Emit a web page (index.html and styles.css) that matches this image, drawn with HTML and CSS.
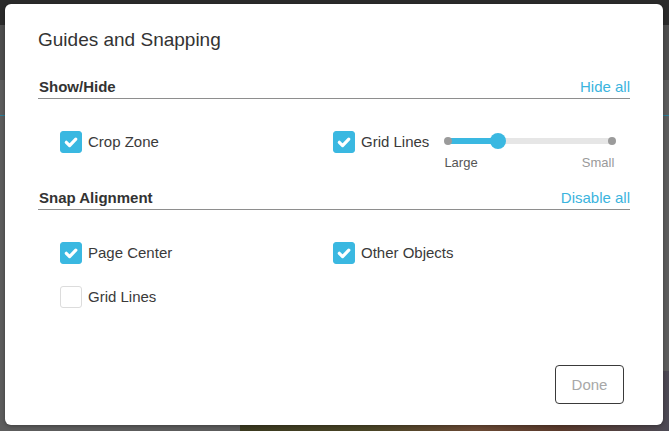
FILE: index.html
```html
<!DOCTYPE html>
<html>
<head>
<meta charset="utf-8">
<link rel="stylesheet" href="styles.css">
</head>
<body>
<div class="app">
  <div class="topbar"></div>
  <div class="toolbar"></div>
  <div class="workspace">
    <div class="teal-line"></div>
    <div class="photo"></div>
  </div>
</div>

<div class="dialog">
  <h1 class="title">Guides and Snapping</h1>

  <div class="section-head first">
    <span class="section-name">Show/Hide</span>
    <a class="section-link">Hide all</a>
  </div>
  <div class="options row-show">
    <label class="opt">
      <span class="cb checked"><svg viewBox="0 0 22 22" width="22" height="22"><path d="M6.3 11.3 L9.6 14.6 L15.8 8.2" fill="none" stroke="#fff" stroke-width="3.2" stroke-linecap="round" stroke-linejoin="round"/></svg></span>
      <span class="opt-text">Crop Zone</span>
    </label>
    <div class="opt">
      <span class="cb checked"><svg viewBox="0 0 22 22" width="22" height="22"><path d="M6.3 11.3 L9.6 14.6 L15.8 8.2" fill="none" stroke="#fff" stroke-width="3.2" stroke-linecap="round" stroke-linejoin="round"/></svg></span>
      <span class="opt-text">Grid Lines</span>
      <div class="slider">
        <div class="track-area">
          <div class="track"></div>
          <div class="fill"></div>
          <span class="dot dot-left"></span>
          <span class="dot dot-right"></span>
          <span class="thumb"></span>
        </div>
        <div class="slider-labels">
          <span class="lbl-large">Large</span>
          <span class="lbl-small">Small</span>
        </div>
      </div>
    </div>
  </div>

  <div class="section-head second">
    <span class="section-name">Snap Alignment</span>
    <a class="section-link">Disable all</a>
  </div>
  <div class="options row-snap">
    <label class="opt">
      <span class="cb checked"><svg viewBox="0 0 22 22" width="22" height="22"><path d="M6.3 11.3 L9.6 14.6 L15.8 8.2" fill="none" stroke="#fff" stroke-width="3.2" stroke-linecap="round" stroke-linejoin="round"/></svg></span>
      <span class="opt-text">Page Center</span>
    </label>
    <label class="opt">
      <span class="cb checked"><svg viewBox="0 0 22 22" width="22" height="22"><path d="M6.3 11.3 L9.6 14.6 L15.8 8.2" fill="none" stroke="#fff" stroke-width="3.2" stroke-linecap="round" stroke-linejoin="round"/></svg></span>
      <span class="opt-text">Other Objects</span>
    </label>
    <label class="opt">
      <span class="cb"></span>
      <span class="opt-text">Grid Lines</span>
    </label>
  </div>

  <div class="footer">
    <button class="done">Done</button>
  </div>
</div>
</body>
</html>
```

FILE: styles.css
```css
* { box-sizing: border-box; }
html, body { margin: 0; padding: 0; }
body {
  width: 669px;
  height: 431px;
  overflow: hidden;
  font-family: "Liberation Sans", Arial, sans-serif;
  background: #5b5b5b;
}
.app {
  display: flex;
  flex-direction: column;
  height: 431px;
}
.topbar { height: 25px; background: #2b2b2b; }
.toolbar { height: 55px; background: #4e4e4e; }
.workspace {
  flex: 1;
  background: #5d5d5d;
  position: relative;
}
.teal-line {
  margin-top: 35px;
  height: 1px;
  background: #2d7f98;
}
.photo {
  position: absolute;
  left: 240px;
  right: 0;
  bottom: 0;
  height: 60px;
  background: linear-gradient(90deg, #3b3a20 0%, #4a4526 30%, #6b4a35 55%, #5a3a2c 75%, #4d4a55 100%);
}

.dialog {
  position: absolute;
  left: 5px;
  top: 4px;
  width: 658px;
  height: 421px;
  background: #fff;
  border-radius: 6px;
  box-shadow: 0 1px 4px rgba(0,0,0,0.35);
  padding: 25px 33px 21px 33px;
  display: flex;
  flex-direction: column;
  color: #333;
}
.title {
  margin: 0;
  font-size: 19px;
  line-height: 22px;
  font-weight: normal;
  color: #333;
}
.section-head {
  display: flex;
  justify-content: space-between;
  align-items: baseline;
  height: 21px;
  padding: 0 0 2px 1px;
  border-bottom: 1px solid #8e8e8e;
  line-height: 18px;
}
.section-head.first { margin-top: 27px; }
.section-head.second { margin-top: 18px; }
.section-name {
  font-size: 15px;
  font-weight: bold;
  color: #333;
}
.section-link {
  font-size: 15px;
  color: #3bb4de;
  cursor: pointer;
}
.options {
  display: grid;
  grid-template-columns: 273px 1fr;
  padding-left: 22px;
  margin-top: 32px;
  row-gap: 22px;
}
.opt {
  display: flex;
  align-items: flex-start;
  gap: 6px;
  cursor: pointer;
  white-space: nowrap;
}
.opt-text {
  font-size: 15px;
  line-height: 22px;
  color: #3a3a3a;
}
.cb {
  width: 22px;
  height: 22px;
  flex: none;
  border-radius: 3px;
  border: 1px solid #dcdcdc;
  background: #fff;
  display: block;
}
.cb svg { display: block; margin: -1px; }
.cb.checked {
  background: #3ab8e1;
  border-color: #3ab8e1;
}

.slider {
  width: 172px;
  flex: none;
  margin-left: 9px;
}
.track-area {
  position: relative;
  height: 20px;
}
.track {
  position: absolute;
  left: 4px;
  right: 4px;
  top: 7px;
  height: 6px;
  border-radius: 3px;
  background: #e6e6e6;
}
.fill {
  position: absolute;
  left: 4px;
  width: 50px;
  top: 7px;
  height: 6px;
  background: #3ab8e1;
}
.dot {
  position: absolute;
  top: 6px;
  width: 8px;
  height: 8px;
  border-radius: 50%;
  background: #9b9b9b;
}
.dot-left { left: 0; }
.dot-right { right: 0; }
.thumb {
  position: absolute;
  left: 46px;
  top: 2px;
  width: 16px;
  height: 16px;
  border-radius: 50%;
  background: #3ab8e1;
}
.slider-labels {
  display: flex;
  justify-content: space-between;
  margin-top: 4px;
  padding-right: 2px;
  font-size: 13px;
  line-height: 16px;
}
.lbl-large { color: #555; }
.lbl-small { color: #9a9a9a; }

.footer {
  margin-top: auto;
  display: flex;
  justify-content: flex-end;
  padding-right: 6px;
}
.done {
  width: 69px;
  height: 39px;
  border: 1px solid #3a3a3a;
  border-radius: 4px;
  background: #fff;
  color: #a8a8a8;
  font-family: "Liberation Sans", Arial, sans-serif;
  font-size: 15px;
  padding: 0;
}
```
